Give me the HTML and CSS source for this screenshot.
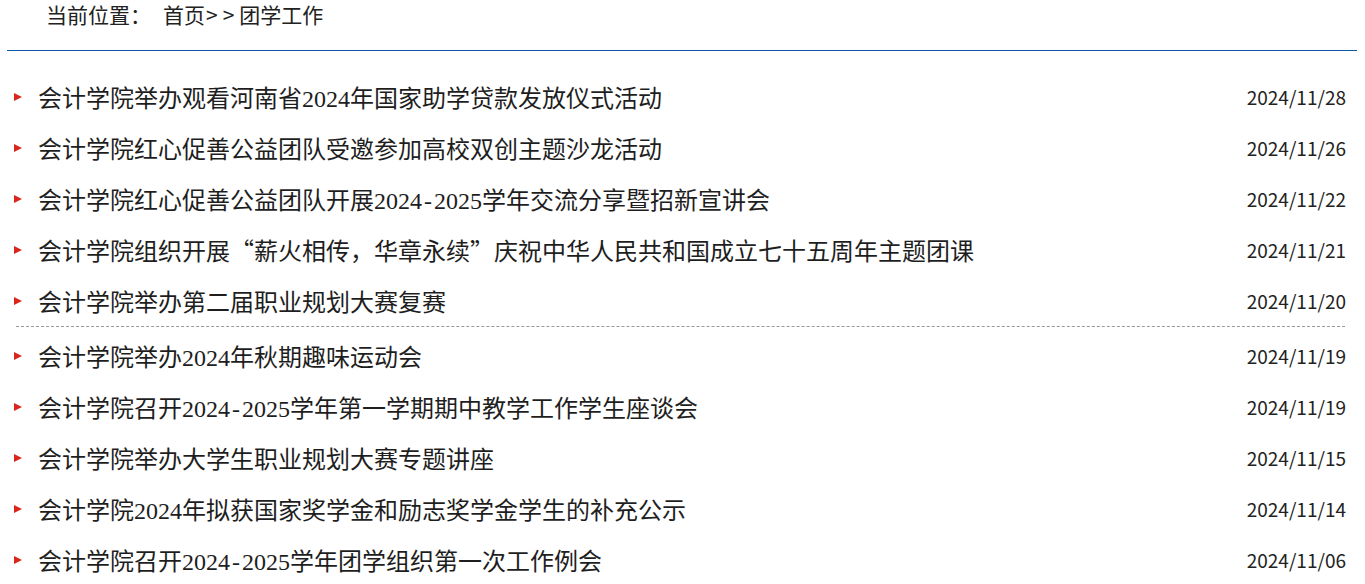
FILE: index.html
```html
<!DOCTYPE html>
<html lang="zh-CN">
<head>
<meta charset="utf-8">
<title>团学工作</title>
<link rel="stylesheet" href="styles.css">
</head>
<body>
<div class="page">
  <div class="crumb">
    <span class="crumb-label">当前位置：</span><span class="crumb-path">首页<span class="sep">&gt;&gt;</span>团学工作</span>
  </div>
  <ul class="news first">
    <li><span class="dot"></span><a class="title">会计学院举办观看河南省2024年国家助学贷款发放仪式活动</a><span class="date">2024/11/28</span></li>
    <li><span class="dot"></span><a class="title">会计学院红心促善公益团队受邀参加高校双创主题沙龙活动</a><span class="date">2024/11/26</span></li>
    <li><span class="dot"></span><a class="title">会计学院红心促善公益团队开展2024<span class="hy">-</span>2025学年交流分享暨招新宣讲会</a><span class="date">2024/11/22</span></li>
    <li><span class="dot"></span><a class="title">会计学院组织开展<span class="q">“</span>薪火相传，华章永续<span class="q">”</span>庆祝中华人民共和国成立七十五周年主题团课</a><span class="date">2024/11/21</span></li>
    <li><span class="dot"></span><a class="title">会计学院举办第二届职业规划大赛复赛</a><span class="date">2024/11/20</span></li>
  </ul>
  <div class="divider"></div>
  <ul class="news">
    <li><span class="dot"></span><a class="title">会计学院举办2024年秋期趣味运动会</a><span class="date">2024/11/19</span></li>
    <li><span class="dot"></span><a class="title">会计学院召开2024<span class="hy">-</span>2025学年第一学期期中教学工作学生座谈会</a><span class="date">2024/11/19</span></li>
    <li><span class="dot"></span><a class="title">会计学院举办大学生职业规划大赛专题讲座</a><span class="date">2024/11/15</span></li>
    <li><span class="dot"></span><a class="title">会计学院2024年拟获国家奖学金和励志奖学金学生的补充公示</a><span class="date">2024/11/14</span></li>
    <li><span class="dot"></span><a class="title">会计学院召开2024<span class="hy">-</span>2025学年团学组织第一次工作例会</a><span class="date">2024/11/06</span></li>
  </ul>
</div>
</body>
</html>
```
FILE: styles.css
```css
html, body {
  margin: 0;
  padding: 0;
  background: #fff;
}
body {
  font-family: "Noto Sans CJK SC", "Noto Sans", sans-serif;
  color: #1e1e1e;
  overflow: hidden;
}
.page {
  margin: 0 8px 0 7px;
}
.crumb {
  height: 51px;
  box-sizing: border-box;
  border-bottom: 1px solid #0a56a8;
  padding-left: 39px;
  font-size: 21px;
  line-height: 28px;
  color: #222;
}
.crumb-label {
  margin-right: 12px;
}
.sep {
  letter-spacing: 5px;
  margin-left: 1px;
}
.news {
  list-style: none;
  margin: 0;
  padding: 0 11px 0 7px;
}
.news.first {
  margin-top: 20px;
}
.news li {
  display: flex;
  align-items: center;
  height: 51px;
}
.dot {
  width: 0;
  height: 0;
  border-top: 4.5px solid transparent;
  border-bottom: 4.5px solid transparent;
  border-left: 8px solid #d9251b;
  margin-right: 16px;
  flex: none;
}
.title {
  flex: 1;
  font-family: "Liberation Serif", "Noto Sans CJK SC", serif;
  font-size: 24px;
  color: #1e1e1e;
  text-decoration: none;
  white-space: nowrap;
}
.title .q {
  font-family: "Noto Sans CJK SC", sans-serif;
}
.title .hy {
  padding: 0 2px;
}
.date {
  font-size: 19px;
  color: #222;
  flex: none;
}
.divider {
  margin: 0 12px 3px 9px;
  border-top: 1px dashed #999;
}
```
